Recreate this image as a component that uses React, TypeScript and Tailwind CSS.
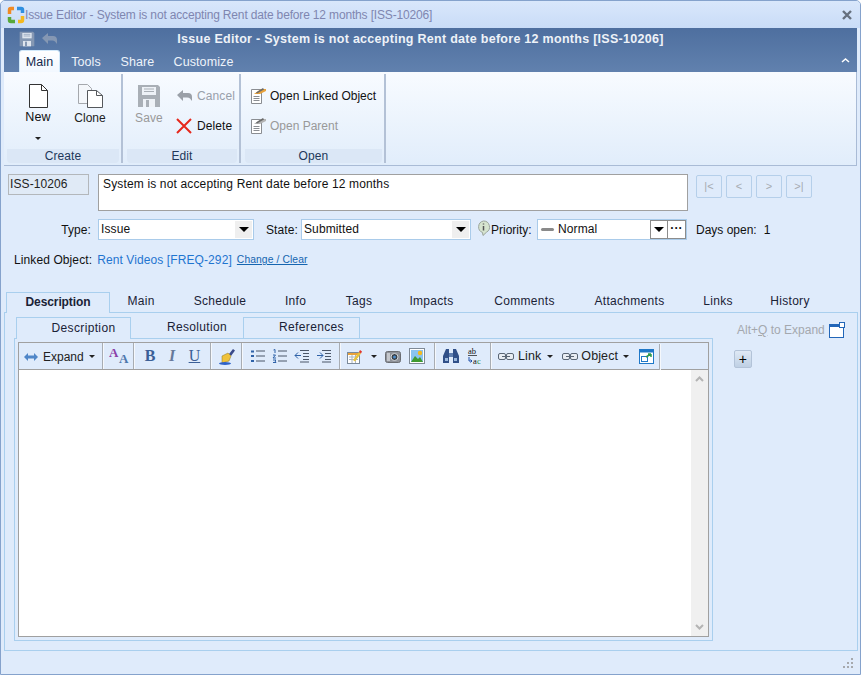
import { ReactNode } from "react";

const Save = ({ color = "#a9afb6", size = 24 }: { color?: string; size?: number }) => (
  <svg width={size} height={size} viewBox="0 0 24 24">
    <path d="M1 1h20l2 2v20H1z" fill={color} />
    <rect x="5" y="3" width="14" height="8" fill="#eef2f7" />
    <path d="M7 5h10M7 7.500h10" stroke={color} strokeWidth="1" />
    <rect x="6" y="15" width="12" height="8" fill="#eef2f7" />
    <rect x="9" y="16" width="3" height="7" fill={color} />
  </svg>
);

const BackArrow = ({ color = "#a0a6ad" }: { color?: string }) => (
  <svg width="15" height="12" viewBox="0 0 15 12">
    <path d="M0 5 6 0v3h5q4 0 4 4v4l-2-2.500q-1-1-3-1H6v3.500z" fill={color} />
  </svg>
);

const Page = ({ color = "#333" }: { color?: string }) => (
  <svg width="19" height="24" viewBox="0 0 19 24">
    <path d="M.5.5h12l6 6v17H.5z" fill="#fff" stroke={color} />
    <path d="M12.500.5v6h6" fill="none" stroke={color} />
  </svg>
);

const Clone = () => (
  <svg width="25" height="24" viewBox="0 0 25 24">
    <path d="M.5.5h9l4 4v15H.5z" fill="#f4f7fb" stroke="#a5a8ad" />
    <path d="M9.500 6.500h9l6 5v12h-15z" fill="#fff" stroke="#55585c" />
    <path d="M18.500 6.500v5h6" fill="none" stroke="#55585c" />
  </svg>
);

const Doc = ({ accent }: { accent: string }) => (
  <svg width="15" height="17" viewBox="0 0 15 17">
    <path d="M.5 2.500h10v14H.5z" fill="#fff" stroke="#8a8d92" />
    <path d="M2.500 9.500h6M2.500 11.500h6M2.500 13.500h6" stroke="#8a8d92" />
    <path d="M3 7 10 2h5v2l-6 3z" fill={accent} />
    <path d="M5 5.500 12 1l1 1.500-7 4z" fill="#6a6a6a" />
  </svg>
);

const Arrow = ({ size = "md" }: { size?: "sm" | "md" }) =>
  size === "md" ? (
    <span className="border-x-[5px] border-t-[5px] border-x-transparent border-t-black" />
  ) : (
    <span className="border-x-[3px] border-t-[3px] border-x-transparent border-t-[#222]" />
  );

const Sep = () => <div className="w-[2px] h-[26px] shrink-0 bg-[#a8adb3] border-r border-[#f5f8fc]" />;

const RibbonGroup = ({ w, label, children }: { w: string; label: string; children: ReactNode }) => (
  <div className={`${w} flex flex-col h-[89px] border-r-2 border-[#b3c1d6]`}>
    <div className="flex-1 flex">{children}</div>
    <div className="h-[14px] mr-[2px] bg-[#dbe7f6] rounded-b-sm text-center text-[12px] leading-[14px] text-[#22385a]">
      {label}
    </div>
  </div>
);

const NavBtn = ({ label, w }: { label: string; w: string }) => (
  <div className={`${w} h-[23px] border border-[#b5cfea] rounded-[2px] flex items-center justify-center text-[11px] text-[#a5aab0]`}>
    {label}
  </div>
);

const ComboArrow = () => (
  <div className="w-[17px] self-stretch m-[1px] bg-[#efefef] flex items-center justify-center">
    <Arrow />
  </div>
);

const Link2 = () => (
  <svg width="16" height="7" viewBox="0 0 16 7" fill="none" stroke="#5a6675">
    <rect x=".5" y=".5" width="7" height="6" rx="1.500" fill="#e8edf3" />
    <rect x="8.500" y=".5" width="7" height="6" rx="1.500" fill="#e8edf3" />
    <path d="M4 3.500h8" stroke="#5a6675" />
  </svg>
);

const ListIcon = ({ kind }: { kind: "bullet" | "number" | "out" | "in" }) => (
  <svg width="16" height="14" viewBox="0 0 16 14" fill="none">
    {kind === "bullet" && (
      <>
        <path d="M6 2h9M6 7h9M6 12h9" stroke="#4a5668" />
        <path d="M1 1.500h3v2H1zM1 6h3v2H1zM1 11h3v2H1z" fill="#2f62a8" />
      </>
    )}
    {kind === "number" && (
      <>
        <path d="M6 2h9M6 7h9M6 12h9" stroke="#4a5668" />
        <path d="M1.500 1 3 .5v3.500M1 6h2.500L1 9h3M1 11h3l-1 1 1 1.500H1" stroke="#2f62a8" />
      </>
    )}
    {kind === "out" && (
      <>
        <path d="M6 1.500h9M9 4.500h6M9 7.500h6M9 10.500h6M6 13h9" stroke="#4a5668" />
        <path d="M7 6.500H1m3-3-3 3 3 3" stroke="#2f62a8" />
      </>
    )}
    {kind === "in" && (
      <>
        <path d="M6 1.500h9M9 4.500h6M9 7.500h6M9 10.500h6M6 13h9" stroke="#4a5668" />
        <path d="M1 6.500h6m-3-3 3 3-3 3" stroke="#2f62a8" />
      </>
    )}
  </svg>
);

export default function App() {
  const tabs = [
    ["Main", "w-[62px]"],
    ["Schedule", "w-[96px]"],
    ["Info", "w-[55px]"],
    ["Tags", "w-[72px]"],
    ["Impacts", "w-[73px]"],
    ["Comments", "w-[113px]"],
    ["Attachments", "w-[97px]"],
    ["Links", "w-[80px]"],
    ["History", "w-[64px]"],
  ];

  return (
    <div className="w-[861px] h-[675px] bg-[#dfebfb] border border-[#85a2cc] rounded-t-[5px] flex flex-col overflow-hidden font-['Liberation_Sans',sans-serif] text-[12px] text-[#111] tracking-[0.1px]">
      {/* title bar */}
      <div className="h-[27px] shrink-0 flex items-center pl-[6px] pr-[8px] bg-gradient-to-b from-[#d9e7fb] to-[#c9dcf7]">
        <svg width="18" height="18" viewBox="0 0 18 18" fill="none" strokeWidth="3.500">
          <path d="M2.500 8V4q0-1.500 1.500-1.500h3" stroke="#f08a24" />
          <path d="M10 2.500h4q1.500 0 1.500 1.500v3" stroke="#2f8fe0" />
          <path d="M15.500 10v4q0 1.500-1.500 1.500h-3" stroke="#f4b81e" />
          <path d="M8 15.500H4q-1.500 0-1.500-1.500v-3" stroke="#58a83a" />
        </svg>
        <span className="flex-1 text-[#7f86b0] text-[12px] tracking-[-0.16px]">Issue Editor - System is not accepting Rent date before 12 months [ISS-10206]</span>
        <svg width="10" height="10" viewBox="0 0 10 10" stroke="#66707e" strokeWidth="2.400">
          <path d="M1 1l8 8M9 1 1 9" />
        </svg>
      </div>

      <div className="mx-[3px] shrink-0 h-[44px] bg-gradient-to-b from-[#4e6f9f] to-[#6181ae] flex flex-col">
        <div className="h-[22px] flex items-center relative">
          <div className="ml-[15px] flex items-center gap-[7px] opacity-90">
            <Save color="#8b9cb5" size={16} />
            <BackArrow color="#8b9cb5" />
          </div>
          <div className="absolute left-0 right-[20px] text-center font-bold text-[12.500px] text-[#eef2f8] tracking-[0.28px]">
            Issue Editor - System is not accepting Rent date before 12 months [ISS-10206]
          </div>
        </div>
        <div className="flex-1 flex items-end pl-[15px] pr-[7px] text-[#eef3fa] text-[12.500px]">
          <div className="w-[41px] h-[22px] bg-gradient-to-b from-white to-[#f2f8ff] rounded-t-[3px] border border-b-0 border-[#d2e9fa] text-[#12284a] text-center leading-[23px]">
            Main
          </div>
          <div className="w-[52px] h-[22px] text-center leading-[24px]">Tools</div>
          <div className="w-[51px] h-[22px] text-center leading-[24px]">Share</div>
          <div className="w-[81px] h-[22px] text-center leading-[24px]">Customize</div>
          <svg className="ml-auto mb-[8px]" width="9" height="7" viewBox="0 0 9 7" fill="none" stroke="#fff" strokeWidth="1.500">
            <path d="M1 5 4.500 2 8 5" />
          </svg>
        </div>
      </div>

      {/* ribbon */}
      <div className="mx-[3px] shrink-0 h-[94px] bg-gradient-to-b from-[#f8fbff] to-[#e1edfb] border-r border-b border-[#a9bbd6] pl-[3px] pt-[2px] flex">
        <RibbonGroup w="w-[116px]" label="Create">
          <div className="w-[52px] ml-[5px] flex flex-col items-center pt-[10px]">
            <Page />
            <span className="text-[12.500px]">New</span>
            <span className="mt-[10px] flex"><Arrow size="sm" /></span>
          </div>
          <div className="w-[52px] flex flex-col items-center pt-[10px]">
            <Clone />
            <span className="mt-[1px] text-[12px] tracking-normal text-[#222]">Clone</span>
          </div>
        </RibbonGroup>
        <RibbonGroup w="w-[118px] pl-[4px]" label="Edit">
          <div className="w-[44px] flex flex-col items-center pt-[10px]">
            <Save />
            <span className="mt-[1px] text-[#999] text-[12px]">Save</span>
          </div>
          <div className="flex flex-col pt-[14px] gap-[14px] ml-[6px]">
            <div className="flex items-center gap-[5px] h-[16px] text-[#98a0aa]">
              <BackArrow color="#9aa0a8" />
              <span>Cancel</span>
            </div>
            <div className="flex items-center gap-[5px] -ml-px h-[16px]">
              <svg width="16" height="16" viewBox="0 0 16 16" stroke="#e6281c" strokeWidth="2">
                <path d="M1 1l14 14M15 1 1 15" />
              </svg>
              <span>Delete</span>
            </div>
          </div>
        </RibbonGroup>
        <RibbonGroup w="w-[145px] pl-[4px]" label="Open">
          <div className="flex flex-col pt-[13px] gap-[13px] pl-[6px]">
            <div className="flex items-center gap-[4px] h-[17px]">
              <Doc accent="#e8a23c" />
              <span className="text-[12px] tracking-normal">Open Linked Object</span>
            </div>
            <div className="flex items-center gap-[4px] h-[17px] text-[#999]">
              <Doc accent="#b4b4b4" />
              <span className="text-[12px] tracking-normal">Open Parent</span>
            </div>
          </div>
        </RibbonGroup>
      </div>

      {/* form */}
      <div className="pl-[7px] pr-[3px] pt-[8px] flex-1 flex flex-col">
        <div className="flex items-start h-[36px]">
          <div className="w-[81px] h-[21px] border border-[#b3b7bb] bg-[#e0eaf6] pl-[1px] leading-[19px] text-[#222]">ISS-10206</div>
          <div className="ml-[9px] w-[590px] h-[37px] border border-[#a0a0a0] bg-white pl-[4px] text-[#111] tracking-[0.15px]">
            System is not accepting Rent date before 12 months
          </div>
          <div className="ml-[8px] mt-[1px] flex gap-[4px]">
            <NavBtn label="|<" w="w-[26px]" />
            <NavBtn label="<" w="w-[26px]" />
            <NavBtn label=">" w="w-[26px]" />
            <NavBtn label=">|" w="w-[26px]" />
          </div>
        </div>

        <div className="mt-[9px] flex items-center h-[21px]">
          <span className="w-[83px] text-right">Type:</span>
          <div className="ml-[7px] w-[156px] h-[21px] border border-[#a9cbea] bg-white flex items-center pl-[2px] leading-[17px]">
            <span className="flex-1 -mt-px">Issue</span>
            <ComboArrow />
          </div>
          <span className="ml-[12px] w-[31px]">State:</span>
          <div className="ml-[4px] w-[170px] h-[21px] border border-[#a9cbea] bg-white flex items-center pl-[2px] leading-[17px]">
            <span className="flex-1 -mt-px">Submitted</span>
            <ComboArrow />
          </div>
          <svg className="ml-[5px] mb-[3px] shrink-0" width="15" height="16" viewBox="0 0 15 16">
            <path d="M7.500 1a6 6 0 0 1 3 11.200L7 15.500l-.5-3A6 6 0 0 1 7.500 1z" fill="#d6e4cf" stroke="#9aa39a" />
            <path d="M7.500 3.500v1M7.500 6v4.500" stroke="#555" strokeWidth="1.500" />
          </svg>
          <span className="w-[46px] tracking-normal">Priority:</span>
          <div className="w-[150px] h-[21px] border border-[#a9cbea] bg-white flex items-center pl-[3px]">
            <span className="w-[13px] h-[3px] bg-[#8a8a8a] rounded-sm" />
            <span className="ml-[4px] flex-1 -mt-px">Normal</span>
            <div className="w-[18px] h-[19px] border border-[#8c8c8c] flex items-center justify-center"><Arrow /></div>
            <div className="w-[18px] h-[19px] border border-l-0 border-[#8c8c8c] flex items-center justify-center font-bold leading-none pb-[3px]">···</div>
          </div>
          <span className="ml-[9px] tracking-normal">Days open:</span>
          <span className="ml-[7px]">1</span>
        </div>

        <div className="mt-[12px] flex items-center h-[16px] pl-[6px]">
          <span>Linked Object:</span>
          <span className="ml-[5px] text-[#1f75d0]">Rent Videos [FREQ-292]</span>
          <span className="ml-[5px] text-[10.300px] text-[#1565b0] underline">Change / Clear</span>
        </div>

        {/* tabs */}
        <div className="mt-[24px] flex h-[21px] -mb-px relative z-10 tracking-[0.3px]">
          <div className="w-[104px] ml-[-2px] h-[21px] border border-b-0 border-[#a9cfee] bg-[#dfebfb] text-center font-bold leading-[18px] tracking-[-0.1px] text-[#1a2236]">
            Description
          </div>
          {tabs.map(([label, w]) => (
            <div key={label} className={`${w} shrink-0 text-center leading-[18px] text-[#1a2236]`}>{label}</div>
          ))}
        </div>
        <div className="ml-[-4px] w-[854px] h-[339px] border border-[#a9cfee] flex pl-[9px] pt-[4px]">
          <div className="w-[699px] flex flex-col">
            <div className="flex h-[22px] pl-[2px] relative z-10 -mb-px tracking-[0.35px]">
              <div className="w-[115px] h-[22px] pl-[20px] border border-b-0 border-[#a9cfee] bg-[#dfebfb] text-center leading-[20px] text-[#1a2236]">Description</div>
              <div className="w-[112px] pl-[20px] text-center leading-[20px] text-[#1a2236]">Resolution</div>
              <div className="w-[117px] pl-[20px] h-[21px] border border-b-0 border-[#a9cfee] text-center leading-[19px] text-[#1a2236]">References</div>
            </div>
            <div className="h-[303px] border border-[#a9cfee] pl-[3px] pr-[3px] pt-[3px]">
              <div className="h-[295px] border border-[#a0a0a0] flex flex-col">
                <div className="h-[27px] shrink-0 border-b border-[#a0a0a0] flex items-center text-[#222] bg-[#dfebfb]">
                  <div className="w-[83px] shrink-0 flex items-center pl-[5px] pt-px">
                    <svg width="14" height="8" viewBox="0 0 14 8" fill="#4f86c8">
                      <path d="M0 4 4 0v2.500h6V0l4 4-4 4V5.500H4V8z" />
                    </svg>
                    <span className="ml-[5px] text-[12px] tracking-normal">Expand</span>
                    <span className="ml-[5px] flex"><Arrow size="sm" /></span>
                  </div>
                  <Sep />
                  <div className="w-[29px] shrink-0 flex justify-center">
                    <svg width="20" height="20" viewBox="0 0 20 20" className="font-['Liberation_Serif',serif] font-bold">
                      <text x="0" y="11" fontSize="13" fill="#8a3fa8">A</text>
                      <text x="10" y="17" fontSize="13" fill="#4e78ad">A</text>
                    </svg>
                  </div>
                  <Sep />
                  <div className="w-[75px] shrink-0 flex justify-around px-[3px] font-['Liberation_Serif',serif] text-[16px] text-[#3b5f97]">
                    <span className="font-bold">B</span>
                    <span className="italic font-bold text-[#66799a]">I</span>
                    <span className="underline">U</span>
                  </div>
                  <Sep />
                  <div className="w-[29px] shrink-0 flex justify-center">
                    <svg width="16" height="17" viewBox="0 0 16 17">
                      <path d="M10 6l4-5 2 1.500L12 8z" fill="#3a4a8a" />
                      <path d="M3 8l6-3 3 3-2 5-7 2z" fill="#efc23c" stroke="#8a7420" strokeWidth=".5" />
                      <ellipse cx="6" cy="15.500" rx="6" ry="1.500" fill="#2f62c8" />
                    </svg>
                  </div>
                  <Sep />
                  <div className="w-[96px] shrink-0 flex justify-around px-[4px]">
                    <ListIcon kind="bullet" />
                    <ListIcon kind="number" />
                    <ListIcon kind="out" />
                    <ListIcon kind="in" />
                  </div>
                  <Sep />
                  <div className="w-[93px] shrink-0 flex items-center pl-[6px]">
                    <svg width="15" height="15" viewBox="0 0 15 15">
                      <rect x=".5" y="3.500" width="12" height="11" fill="#fff" stroke="#7b8a9a" />
                      <path d="M1 4h11v2H1z" fill="#e8a23c" />
                      <path d="M2 8h9M2 10.500h9M5 6v8M8.500 6v8" stroke="#a9b4c0" />
                      <path d="M6 11 12 3l2 1.500-6 8z" fill="#e8c23c" />
                      <path d="M12 3l1-2 2 1.500-1 2z" fill="#e0342c" />
                    </svg>
                    <span className="ml-[9px] flex"><Arrow size="sm" /></span>
                    <svg className="ml-[8px]" width="16" height="13" viewBox="0 0 16 13">
                      <rect x=".5" y="1.500" width="15" height="11" rx="2" fill="#8e9299" stroke="#6a6d72" />
                      <circle cx="9.500" cy="7" r="3.500" fill="#3a4148" stroke="#d5d8dc" />
                      <circle cx="9.500" cy="7" r="1.500" fill="#4a8ac8" />
                      <rect x="2" y="3" width="3" height="8" fill="#c4c7cc" />
                    </svg>
                    <svg className="ml-[8px]" width="16" height="16" viewBox="0 0 16 16">
                      <rect x=".5" y=".5" width="15" height="15" fill="#fff" stroke="#7f8a96" />
                      <rect x="2" y="2" width="12" height="12" fill="#8ac4f0" />
                      <circle cx="11" cy="5" r="2.200" fill="#f4b81e" />
                      <path d="M2 14l4-6 3 3 2-2 3 5z" fill="#3f9a2f" />
                    </svg>
                  </div>
                  <Sep />
                  <div className="w-[54px] shrink-0 flex items-center justify-center gap-[8px]">
                    <svg width="16" height="15" viewBox="0 0 16 15" fill="#2f4f88">
                      <path d="M3 0h3v14H0V7zM10 0h3l3 7v7h-6z" />
                      <rect x="6" y="4" width="4" height="4" fill="#5f7fb0" />
                      <path d="M2 9h3v3H2zM11 9h3v3h-3z" fill="#9ab8dc" />
                    </svg>
                    <svg width="17" height="20" viewBox="0 0 17 20" className="font-['Liberation_Serif',serif]">
                      <text x="1" y="8" fontSize="8.500" fill="#111">ab</text>
                      <path d="M1 9.500h9" stroke="#111" strokeWidth=".7" />
                      <path d="M2 11v4h3m-1.500-1.500L5 15l-1.500 1.500" stroke="#1f4fa8" fill="none" />
                      <text x="6" y="18" fontSize="8.500" fill="#111">a<tspan fill="#1a8a3a">c</tspan></text>
                    </svg>
                  </div>
                  <Sep />
                  <div className="flex items-center pl-[6px] pt-px">
                    <Link2 />
                    <span className="ml-[4px] text-[12.500px]">Link</span>
                    <span className="ml-[6px] flex"><Arrow size="sm" /></span>
                    <span className="ml-[9px] flex"><Link2 /></span>
                    <span className="ml-[3px] text-[12.500px]">Object</span>
                    <span className="ml-[5px] flex"><Arrow size="sm" /></span>
                    <svg className="ml-[10px]" width="15" height="15" viewBox="0 0 15 15">
                      <rect x=".5" y=".5" width="14" height="14" fill="#fff" stroke="#1f78c8" />
                      <rect x="1" y="1" width="13" height="2.500" fill="#1f78c8" />
                      <rect x="2.500" y="7.500" width="6" height="5" fill="#fff" stroke="#1f78c8" />
                      <path d="M7 8l5-3M12 5H9M12 5v3" stroke="#2f9a4f" strokeWidth="1.500" fill="none" />
                    </svg>
                    <span className="ml-[5px]"><Sep /></span>
                  </div>
                </div>
                <div className="flex-1 bg-white flex justify-end">
                  <div className="w-[17px] bg-[#f0f0f0] flex flex-col justify-between items-center py-[6px]">
                    <svg width="9" height="6" viewBox="0 0 9 6" fill="none" stroke="#b4b4b4" strokeWidth="2">
                      <path d="M1 5l3.500-3.500L8 5" />
                    </svg>
                    <svg width="9" height="6" viewBox="0 0 9 6" fill="none" stroke="#b4b4b4" strokeWidth="2">
                      <path d="M1 1l3.500 3.500L8 1" />
                    </svg>
                  </div>
                </div>
              </div>
            </div>
          </div>
          <div className="flex-1 flex flex-col">
            <div className="h-[26px] flex items-center pl-[24px] text-[#a4a8ae] tracking-normal">
              <span>Alt+<span className="underline">Q</span> to Expand</span>
              <svg className="ml-[4px]" width="16" height="16" viewBox="0 0 16 16">
                <rect x=".5" y="2.500" width="14" height="13" fill="#fff" stroke="#2266b8" />
                <rect x="1" y="2" width="13" height="3" fill="#2266b8" />
                <rect x="10.500" y=".5" width="5" height="5" fill="#fff" stroke="#2266b8" />
              </svg>
            </div>
            <div className="ml-[21px] mt-[7px] w-[18px] h-[18px] rounded-[2px] border border-[#b3c3d8] bg-gradient-to-b from-[#dfe9f5] to-[#bfd0e4] flex items-center justify-center text-[14px] leading-none text-black">
              +
            </div>
          </div>
        </div>

        <div className="flex-1 flex justify-end items-end pr-[4px] pb-[6px]">
          <svg width="11" height="11" viewBox="0 0 11 11" fill="#a6a9ad">
            <path d="M9 1h2v2H9zM5 5h2v2H5zM9 5h2v2H9zM1 9h2v2H1zM5 9h2v2H5zM9 9h2v2H9z" />
          </svg>
        </div>
      </div>
    </div>
  );
}
